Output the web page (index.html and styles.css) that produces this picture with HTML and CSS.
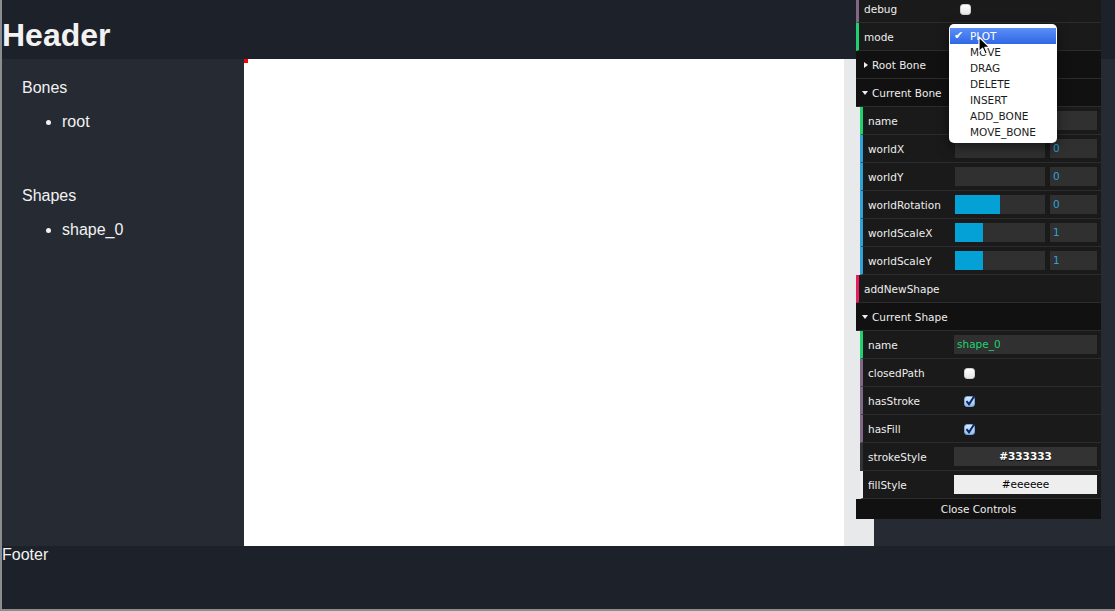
FILE: index.html
```html
<!DOCTYPE html>
<html>
<head>
<meta charset="utf-8">
<title>Skeleton editor</title>
<link rel="stylesheet" href="styles.css">
</head>
<body>
<div class="page">
  <header class="header"><h1 class="header-title">Header</h1></header>
  <main class="main">
    <aside class="sidebar">
      <section class="group">
        <div class="group-title">Bones</div>
        <ul class="group-list"><li>root</li></ul>
      </section>
      <section class="group">
        <div class="group-title">Shapes</div>
        <ul class="group-list"><li>shape_0</li></ul>
      </section>
    </aside>
    <div class="canvas"><span class="marker"></span></div>
    <div class="strip"></div>
  </main>
  <footer class="footer">Footer</footer>
</div>

<div class="gui">
  <ul class="gui-list">
    <li class="row boolean"><span class="pn">debug</span><div class="ctl"><span class="cb"></span></div></li>
    <li class="row string"><span class="pn">mode</span><div class="ctl"><span class="select"></span></div></li>
    <li class="folder"><div class="title closed">Root Bone</div></li>
    <li class="folder">
      <div class="title open">Current Bone</div>
      <ul class="gui-list sub">
        <li class="row string"><span class="pn">name</span><div class="ctl"><span class="txt str"></span></div></li>
        <li class="row number"><span class="pn">worldX</span><div class="ctl"><span class="slider"><span class="fg" style="width:0%"></span></span><span class="num">0</span></div></li>
        <li class="row number"><span class="pn">worldY</span><div class="ctl"><span class="slider"><span class="fg" style="width:0%"></span></span><span class="num">0</span></div></li>
        <li class="row number"><span class="pn">worldRotation</span><div class="ctl"><span class="slider"><span class="fg" style="width:50%"></span></span><span class="num">0</span></div></li>
        <li class="row number"><span class="pn">worldScaleX</span><div class="ctl"><span class="slider"><span class="fg" style="width:31%"></span></span><span class="num">1</span></div></li>
        <li class="row number"><span class="pn">worldScaleY</span><div class="ctl"><span class="slider"><span class="fg" style="width:31%"></span></span><span class="num">1</span></div></li>
      </ul>
    </li>
    <li class="row function"><span class="pn">addNewShape</span></li>
    <li class="folder">
      <div class="title open">Current Shape</div>
      <ul class="gui-list sub">
        <li class="row string"><span class="pn">name</span><div class="ctl"><span class="txt str">shape_0</span></div></li>
        <li class="row boolean"><span class="pn">closedPath</span><div class="ctl"><span class="cb"></span></div></li>
        <li class="row boolean"><span class="pn">hasStroke</span><div class="ctl"><span class="cb checked"><svg class="tick" viewBox="0 0 12 12" width="12" height="12"><path d="M2.5 6.2 L5 9.2 L10.5 0.8" fill="none" stroke="#13245e" stroke-width="2"/></svg></span></div></li>
        <li class="row boolean"><span class="pn">hasFill</span><div class="ctl"><span class="cb checked"><svg class="tick" viewBox="0 0 12 12" width="12" height="12"><path d="M2.5 6.2 L5 9.2 L10.5 0.8" fill="none" stroke="#13245e" stroke-width="2"/></svg></span></div></li>
        <li class="row color-dark"><span class="pn">strokeStyle</span><div class="ctl"><span class="colorbox dark">#333333</span></div></li>
        <li class="row color-light"><span class="pn">fillStyle</span><div class="ctl"><span class="colorbox light">#eeeeee</span></div></li>
      </ul>
    </li>
  </ul>
  <div class="close">Close Controls</div>
</div>

<div class="popup">
  <div class="opt sel">PLOT</div>
  <div class="opt">MOVE</div>
  <div class="opt">DRAG</div>
  <div class="opt">DELETE</div>
  <div class="opt">INSERT</div>
  <div class="opt">ADD_BONE</div>
  <div class="opt">MOVE_BONE</div>
</div>

<svg class="cursor" width="13" height="20" viewBox="0 0 13 20"><path d="M1 1 L1 15.5 L4.6 12.2 L7.2 18 L9.4 17 L6.9 11.4 L11.6 11.4 Z" fill="#000" stroke="#fff" stroke-width="1.2" stroke-linejoin="round"/></svg>
</body>
</html>
```

FILE: styles.css
```css
* { box-sizing: border-box; }

html, body {
  margin: 0;
  padding: 0;
}

body {
  width: 1115px;
  height: 611px;
  overflow: hidden;
  border-left: 2px solid #8d8d8d;
  border-bottom: 2px solid #8d8d8d;
  background: #1d2129;
  color: #f2f2f2;
  font-family: "Liberation Sans", Arial, sans-serif;
}

.page {
  display: flex;
  flex-direction: column;
  height: 609px;
}

.header {
  height: 59px;
  flex: none;
  padding-top: 17px;
  background: #1d2129;
}

.header-title {
  margin: 0;
  font-size: 32px;
  font-weight: bold;
  line-height: 37px;
}

.main {
  display: flex;
  height: 487px;
  flex: none;
  background: #262a33;
}

.sidebar {
  width: 242px;
  flex: none;
  padding: 20px;
  font-size: 16px;
  line-height: 18px;
}

.group { margin-bottom: 56px; }

.group-title { line-height: 18px; }

.group-list {
  margin: 16px 0;
  padding-left: 40px;
}

.canvas {
  width: 600px;
  flex: none;
  background: #fff;
  position: relative;
}

.marker {
  position: absolute;
  left: 0;
  top: 0;
  width: 4px;
  height: 4px;
  background: #ff0000;
}

.strip {
  width: 30px;
  flex: none;
  background: #e8e9eb;
}

.footer {
  flex: 1;
  font-size: 16px;
  line-height: 18px;
  background: #1d2129;
}

/* control panel */
.gui {
  position: absolute;
  top: -5px;
  right: 14px;
  width: 245px;
  font-family: "DejaVu Sans", Verdana, sans-serif;
  font-size: 10.5px;
  color: #eeeeee;
}

.gui-list {
  list-style: none;
  margin: 0;
  padding: 0;
}

.gui-list.sub { margin-left: 4px; }

.row {
  display: flex;
  height: 28px;
  line-height: 27px;
  padding: 0 4px 0 5px;
  background: #1a1a1a;
  border-bottom: 1px solid #2c2c2c;
  border-left: 3px solid #806787;
}

.row.boolean { border-left-color: #806787; }
.row.string { border-left-color: #1ed36f; }
.row.number { border-left-color: #2fa1d6; }
.row.function { border-left-color: #e61d5f; }
.row.color-dark { border-left-color: #333333; }
.row.color-light { border-left-color: #eeeeee; }

.pn {
  width: 86px;
  flex: none;
  padding-top: 1px;
  overflow: hidden;
  white-space: nowrap;
}

.ctl {
  flex: 1;
  display: flex;
  align-items: flex-start;
}

.title {
  position: relative;
  height: 28px;
  line-height: 27px;
  padding: 1px 0 0 16px;
  background: #111111;
  border-bottom: 1px solid #2c2c2c;
}

.title::before {
  content: "";
  position: absolute;
  width: 0;
  height: 0;
}

.title.closed::before {
  left: 8px;
  top: 11px;
  border-top: 3px solid transparent;
  border-bottom: 3px solid transparent;
  border-left: 4px solid #eeeeee;
}

.title.open::before {
  left: 6px;
  top: 12px;
  border-left: 3px solid transparent;
  border-right: 3px solid transparent;
  border-top: 4px solid #eeeeee;
}

.close {
  height: 20px;
  line-height: 20px;
  text-align: center;
  background: #111111;
}

.cb {
  position: relative;
  width: 11px;
  height: 11px;
  margin: 9px 0 0 10px;
  border-radius: 3px;
  background: linear-gradient(#ffffff, #e6e6e6);
  border: 1px solid #cfcfcf;
}

.cb.checked {
  background: linear-gradient(#d6ebff, #8fc3f4);
  border-color: #7aa8d8;
}

.tick {
  position: absolute;
  left: -1px;
  top: -2px;
}

.select {
  margin: 5px 0 0 2px;
  width: 96px;
  height: 18px;
  background: #eee;
}

.txt {
  width: 143px;
  height: 19px;
  margin-top: 4px;
  padding: 0 3px;
  line-height: 19px;
  background: #303030;
  overflow: hidden;
  white-space: nowrap;
}

.txt.str { color: #1ed36f; }

.slider {
  width: 90px;
  height: 19px;
  margin: 4px 0 0 1px;
  background: #303030;
  display: flex;
}

.fg {
  height: 100%;
  background: #04a1d6;
}

.num {
  width: 47px;
  height: 19px;
  margin: 4px 0 0 5px;
  padding-left: 3px;
  line-height: 19px;
  background: #303030;
  color: #2fa1d6;
}

.colorbox {
  width: 143px;
  height: 19px;
  margin-top: 4px;
  line-height: 19px;
  text-align: center;
  font-weight: bold;
}

.colorbox.dark {
  background: #333333;
  color: #ffffff;
  text-shadow: rgba(0, 0, 0, 0.7) 0 1px 1px;
}

.colorbox.light {
  background: #eeeeee;
  color: #000000;
  font-weight: normal;
  text-shadow: rgba(255, 255, 255, 0.7) 0 1px 1px;
}

/* open native dropdown */
.popup {
  position: absolute;
  left: 949px;
  top: 24px;
  width: 108px;
  height: 119px;
  padding: 4px 1px 3px;
  background: #ffffff;
  border-radius: 5px;
  box-shadow: 0 4px 12px rgba(0, 0, 0, 0.5);
  font-family: "DejaVu Sans", Verdana, sans-serif;
  font-size: 10.5px;
  color: #1b1b1b;
}

.opt {
  position: relative;
  height: 16px;
  line-height: 16px;
  padding-left: 20px;
}

.opt.sel {
  background: linear-gradient(#5b8ff6, #2f67e6);
  color: #ffffff;
}

.opt.sel::before {
  content: "\2714";
  position: absolute;
  left: 4px;
  top: 0;
  font-size: 11px;
}

.cursor {
  position: absolute;
  left: 978px;
  top: 36px;
}
```
